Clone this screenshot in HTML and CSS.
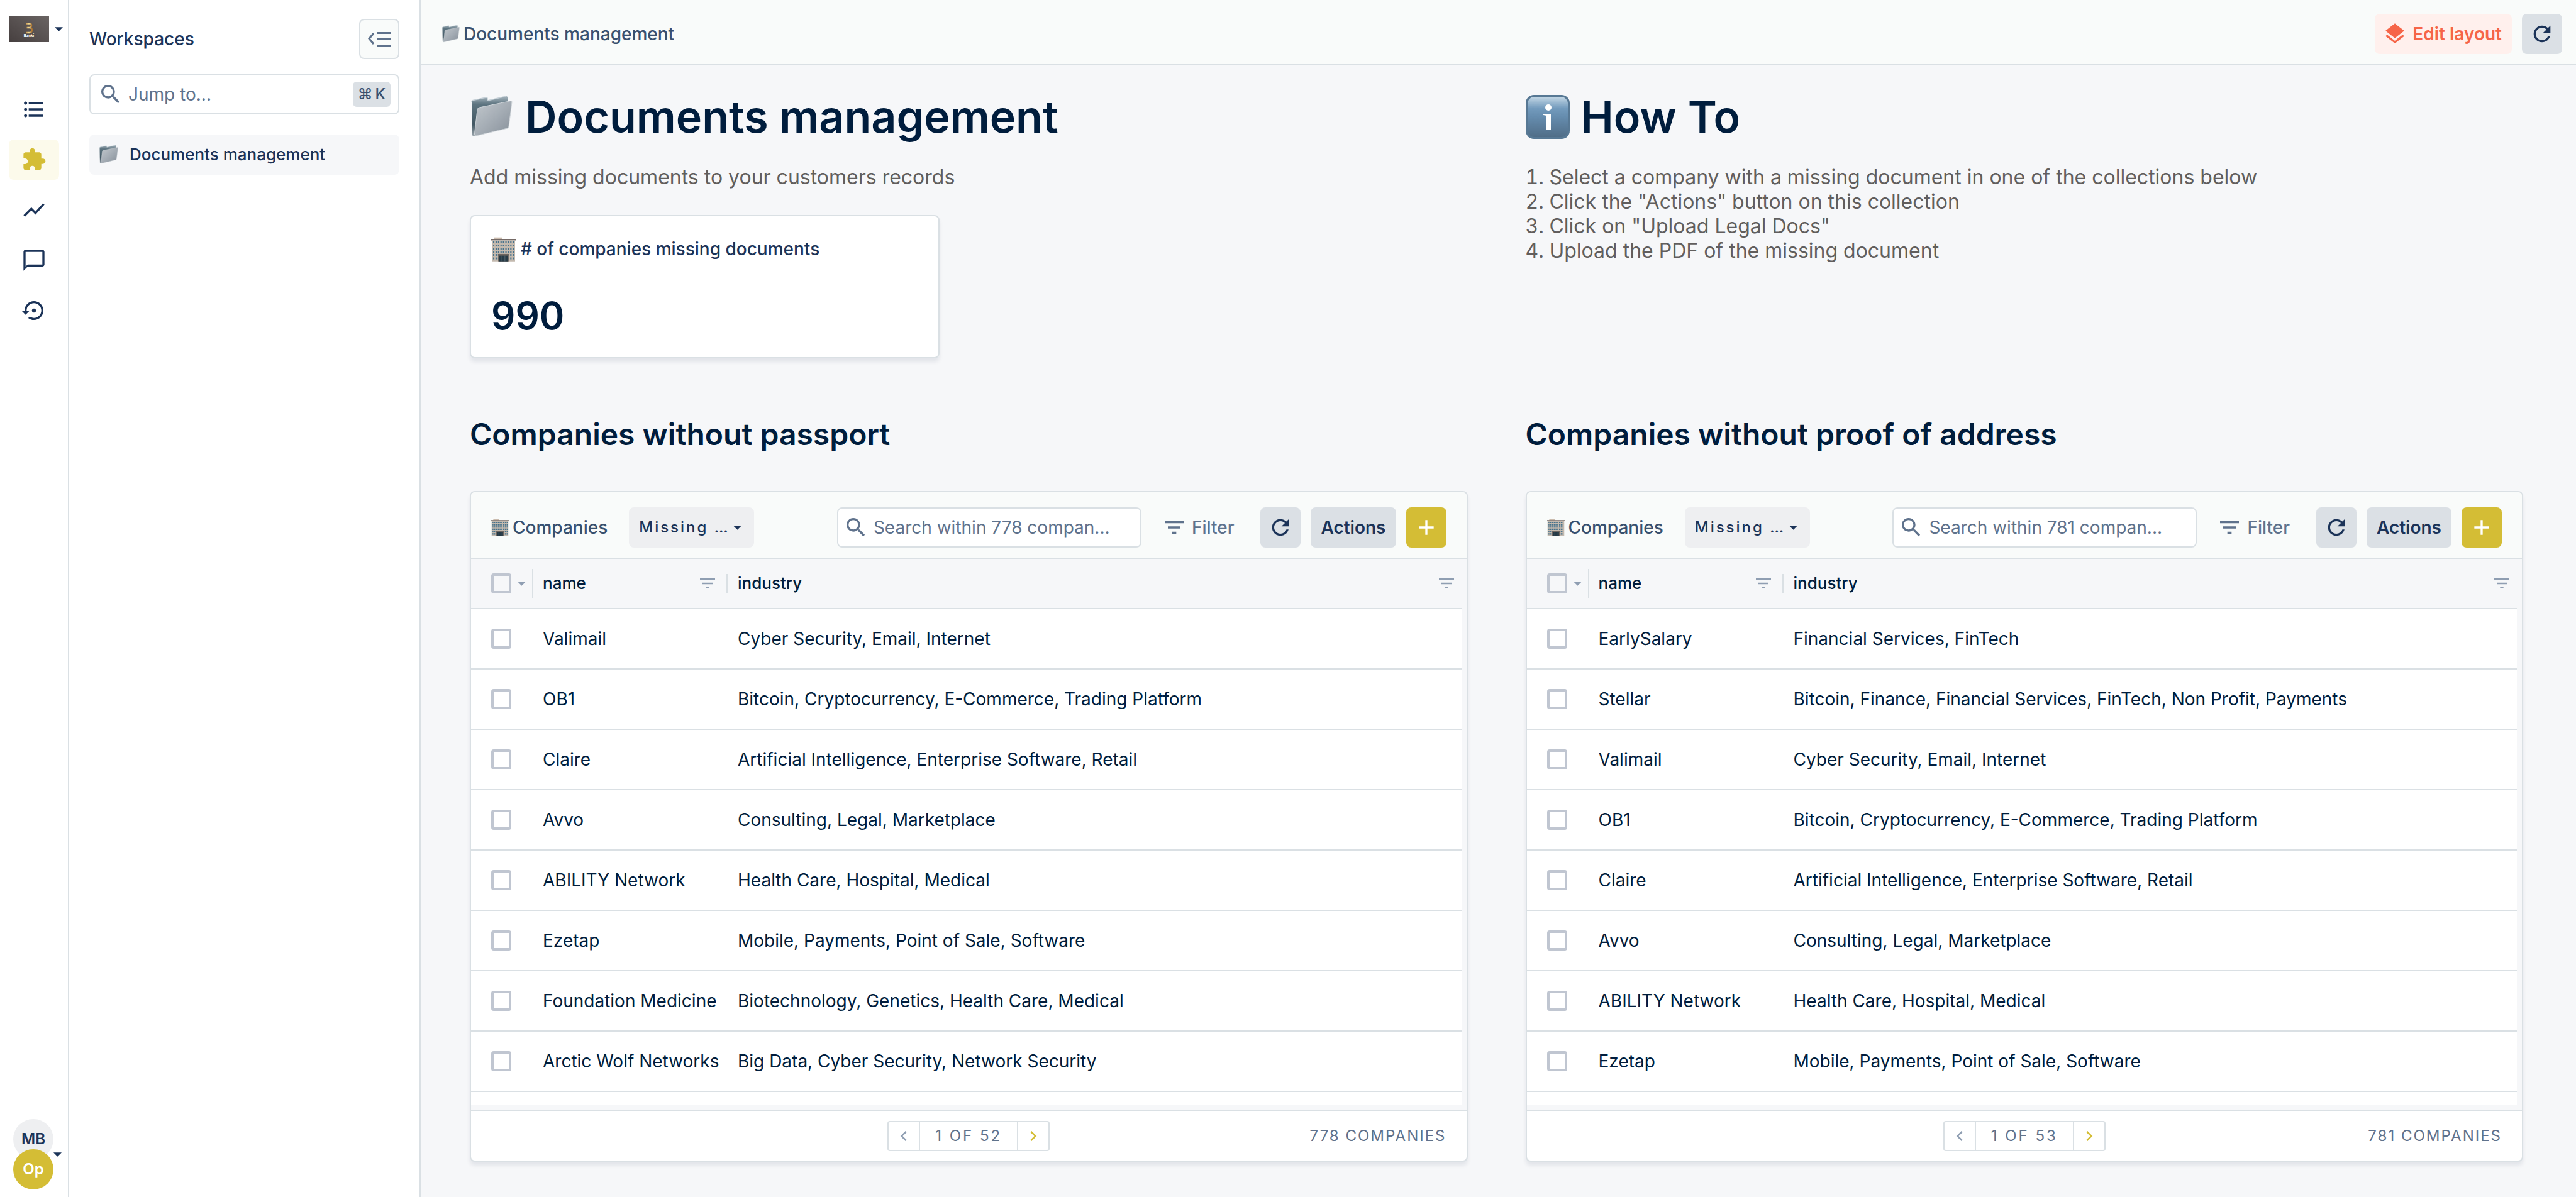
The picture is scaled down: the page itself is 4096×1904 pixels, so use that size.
FILE: index.html
```html
<!DOCTYPE html>
<html lang="en">
<head>
<meta charset="utf-8">
<title>Documents management</title>
<link rel="stylesheet" href="styles.css">
</head>
<body>
<svg class="defs" width="0" height="0" aria-hidden="true">
  <defs>
    <linearGradient id="logo-bg" x1="0" y1="1" x2="1" y2="0"><stop offset="0" stop-color="#463f3f"/><stop offset="1" stop-color="#6a6463"/></linearGradient>
    <linearGradient id="gold" x1="0" y1="0" x2="1" y2="0"><stop offset="0" stop-color="#c18b45"/><stop offset=".5" stop-color="#f3dc93"/><stop offset="1" stop-color="#a8702f"/></linearGradient>
    <linearGradient id="folder-back" x1="0" y1="0" x2="0" y2="1"><stop offset="0" stop-color="#a9b7c0"/><stop offset=".2" stop-color="#5d7480"/><stop offset=".7" stop-color="#415662"/><stop offset="1" stop-color="#9fa9b0"/></linearGradient>
    <linearGradient id="folder-front" x1="0" y1="0" x2="1" y2="1"><stop offset="0" stop-color="#c2c8cd"/><stop offset=".5" stop-color="#a5adb5"/><stop offset="1" stop-color="#868f99"/></linearGradient>
    <linearGradient id="info-bg" x1="0" y1="0" x2="0" y2="1"><stop offset="0" stop-color="#c3d7e5"/><stop offset=".28" stop-color="#739bbd"/><stop offset=".5" stop-color="#658cae"/><stop offset="1" stop-color="#506d87"/></linearGradient>
  </defs>
  <symbol id="i-list" viewBox="0 0 24 24"><path d="M4 10.5c-.83 0-1.5.67-1.5 1.5s.67 1.5 1.5 1.5 1.5-.67 1.5-1.5-.67-1.5-1.5-1.5zm0-6c-.83 0-1.5.67-1.5 1.5S3.170 7.500 4 7.500 5.500 6.830 5.500 6 4.830 4.500 4 4.500zm0 12c-.83 0-1.5.68-1.5 1.500s.68 1.500 1.500 1.500 1.500-.68 1.500-1.500-.67-1.500-1.500-1.500zM7 19h14v-2H7v2zm0-6h14v-2H7v2zm0-8v2h14V5H7z"/></symbol>
  <symbol id="i-puzzle" viewBox="0 0 24 24"><path d="M20.500 11H19V7c0-1.100-.9-2-2-2h-4V3.500C13 2.120 11.880 1 10.500 1S8 2.120 8 3.500V5H4c-1.100 0-1.990.9-1.990 2v3.800H3.500c1.490 0 2.700 1.210 2.700 2.700s-1.210 2.700-2.700 2.700H2V20c0 1.100.9 2 2 2h3.800v-1.500c0-1.490 1.210-2.700 2.700-2.700s2.700 1.210 2.700 2.700V22H17c1.100 0 2-.9 2-2v-4h1.500c1.380 0 2.500-1.120 2.500-2.500S21.880 11 20.500 11z"/></symbol>
  <symbol id="i-chart" viewBox="0 0 24 24"><path d="M3.500 18.490l6-6.010 4 4L22 6.920l-1.410-1.410-7.090 7.970-4-4L2 16.990z"/></symbol>
  <symbol id="i-chat" viewBox="0 0 24 24"><path d="M20 2H4c-1.100 0-2 .9-2 2v18l4-4h14c1.100 0 2-.9 2-2V4c0-1.100-.9-2-2-2zm0 14H6l-2 2V4h16v12z"/></symbol>
  <symbol id="i-history" viewBox="0 0 24 24"><path d="M14 12c0-1.100-.9-2-2-2s-2 .9-2 2 .9 2 2 2 2-.9 2-2zm-2-9c-4.970 0-9 4.030-9 9H0l4 4 4-4H5c0-3.870 3.130-7 7-7s7 3.130 7 7-3.130 7-7 7c-1.510 0-2.910-.49-4.060-1.300l-1.420 1.440C8.040 20.300 9.940 21 12 21c4.970 0 9-4.030 9-9s-4.030-9-9-9z"/></symbol>
  <symbol id="i-search" viewBox="0 0 24 24"><path d="M15.500 14h-.79l-.28-.27C15.410 12.590 16 11.110 16 9.500 16 5.910 13.090 3 9.500 3S3 5.910 3 9.500 5.910 16 9.500 16c1.610 0 3.090-.59 4.230-1.570l.27.28v.79l5 4.990L20.490 19l-4.990-5zm-6 0C7.010 14 5 11.990 5 9.500S7.010 5 9.500 5 14 7.010 14 9.500 11.990 14 9.500 14z"/></symbol>
  <symbol id="i-layers" viewBox="0 0 24 24"><path d="M11.990 18.540l-7.370-5.730L3 14.070l9 7 9-7-1.630-1.270-7.380 5.740zM12 16l7.360-5.730L21 9l-9-7-9 7 1.630 1.270L12 16z"/></symbol>
  <symbol id="i-refresh" viewBox="0 0 24 24"><path d="M17.650 6.350C16.200 4.900 14.210 4 12 4c-4.420 0-7.990 3.580-7.990 8s3.570 8 7.990 8c3.730 0 6.840-2.550 7.730-6h-2.080c-.82 2.330-3.040 4-5.650 4-3.310 0-6-2.690-6-6s2.690-6 6-6c1.660 0 3.140.69 4.220 1.780L13 11h7V4l-2.350 2.350z"/></symbol>
  <symbol id="i-filter" viewBox="0 0 24 24"><path d="M10 18h4v-2h-4v2zM3 6v2h18V6H3zm3 7h12v-2H6v2z"/></symbol>
  <symbol id="i-plus" viewBox="0 0 24 24"><path d="M19 13h-6v6h-2v-6H5v-2h6V5h2v6h6v2z"/></symbol>
  <symbol id="i-prev" viewBox="0 0 24 24"><path d="M15.410 7.410L14 6l-6 6 6 6 1.410-1.410L10.830 12z"/></symbol>
  <symbol id="i-next" viewBox="0 0 24 24"><path d="M10 6L8.590 7.410 13.170 12l-4.580 4.590L10 18l6-6z"/></symbol>
  <symbol id="i-caret" viewBox="0 0 14 7"><path d="M0 0h14L7 7z"/></symbol>
  <symbol id="i-collapse" viewBox="0 0 36 24"><path d="M15 1h21v3H15zM15 11h21v3H15zM15 21h21v3H15z"/><path d="M9 3L2 11.500 9 20" fill="none" stroke="currentColor" stroke-width="3"/></symbol>
  <symbol id="i-folder" viewBox="0 0 66 66">
    <path d="M1 9Q1 7 3 6.500L24 2Q26 2 26 4V7L56 0Q58 0 58 2V12L8 60L5 64Q2 64 2 61Z" fill="url(#folder-back)"/>
    <path d="M1 9Q1 7 3 6.500L24 2Q26 2 26 4V7L56 0" fill="none" stroke="#c4cfd6" stroke-width="1.500"/>
    <path d="M13 18L63 7.500Q65 7.500 65 9L60 48Q60 50 58 51L8 63Q5 63 5.500 60L10 21Q10.500 19 13 18Z" fill="url(#folder-front)" stroke="#cdd3d8" stroke-width="1"/>
  </symbol>
  <symbol id="i-building" viewBox="0 0 116 116">
    <path d="M14 2H52V10H14z" fill="#cbbcae"/>
    <path d="M0 9H116V16H0z" fill="#756a66"/>
    <path d="M3 16H113V115H3z" fill="#c3b9ae"/>
    <path d="M9 25H108M9 40H108M9 55H108M9 70H108M9 85H108M9 101H108" fill="none" stroke="#44718c" stroke-width="9" stroke-dasharray="6 5.600"/>
    <path d="M33 80H83V115H33z" fill="#6d6560"/>
    <path d="M38 88H78V115H38z" fill="#263a46"/>
    <path d="M51 88v27M65 88v27" stroke="#6d7f88" stroke-width="2"/>
  </symbol>
  <symbol id="i-info" viewBox="0 0 70 70">
    <rect width="70" height="70" rx="13" fill="#577894"/>
    <rect x="3" y="3" width="64" height="64" rx="11" fill="url(#info-bg)"/>
    <circle cx="36" cy="20" r="5" fill="#fff"/>
    <path d="M28 30.500H40V55H33V33L28 32Z" fill="#fff"/>
  </symbol>
</svg>

<div class="app">
  <nav class="rail" aria-label="Main">
    <button class="brand" aria-label="Switch project">
      <svg class="logo" viewBox="0 0 64 42"><rect width="64" height="42" fill="url(#logo-bg)"/><path d="M27 12.500H33Q36 12.500 36 15.500T33 19H28.500H33.500Q37 19.500 37 23T33 27H27" fill="none" stroke="url(#gold)" stroke-width="2.500"/><text x="32" y="34" text-anchor="middle" class="logo-name">Banki</text></svg>
      <svg class="caret"><use href="#i-caret"/></svg>
    </button>
    <div class="rail-links">
      <a href="#data" aria-label="Data"><svg class="icon"><use href="#i-list"/></svg></a>
      <a href="#workspaces" class="active" aria-label="Workspaces"><svg class="icon"><use href="#i-puzzle"/></svg></a>
      <a href="#dashboards" aria-label="Dashboards"><svg class="icon"><use href="#i-chart"/></svg></a>
      <a href="#notes" aria-label="Notes"><svg class="icon"><use href="#i-chat"/></svg></a>
      <a href="#activity" aria-label="Activity"><svg class="icon"><use href="#i-history"/></svg></a>
    </div>
    <button class="account" aria-label="Account">
      <span class="avatars"><span class="avatar">MB</span><span class="avatar team">Op</span></span>
      <svg class="caret"><use href="#i-caret"/></svg>
    </button>
  </nav>

  <aside class="side">
    <div class="side-head">
      <span>Workspaces</span>
      <button class="collapse" aria-label="Collapse panel"><svg class="collapse-icon"><use href="#i-collapse"/></svg></button>
    </div>
    <label class="field jump">
      <svg class="icon"><use href="#i-search"/></svg>
      <input type="text" placeholder="Jump to..." aria-label="Jump to">
      <kbd><span>⌘</span><span>K</span></kbd>
    </label>
    <a href="#documents" class="side-item"><svg class="emoji"><use href="#i-folder"/></svg>Documents management</a>
  </aside>

  <main class="main">
    <header class="topbar">
      <div class="crumb"><svg class="emoji small"><use href="#i-folder"/></svg>Documents management</div>
      <div class="top-actions">
        <button class="btn edit"><svg class="icon"><use href="#i-layers"/></svg>Edit layout</button>
        <button class="btn square" aria-label="Refresh"><svg class="icon"><use href="#i-refresh"/></svg></button>
      </div>
    </header>

    <div class="board">
      <section class="column">
        <div class="intro">
          <h1><svg class="emoji h-folder"><use href="#i-folder"/></svg>Documents management</h1>
          <p>Add missing documents to your customers records</p>
          <div class="metric">
            <div class="metric-title"><svg class="emoji building"><use href="#i-building"/></svg># of companies missing documents</div>
            <div class="metric-value">990</div>
          </div>
        </div>
        <h2>Companies without passport</h2>
        <div class="panel">
          <div class="toolbar">
            <div class="collection"><svg class="emoji small"><use href="#i-building"/></svg>Companies</div>
            <div class="segment"><select aria-label="Segment"><option>Missing …</option></select><svg class="caret"><use href="#i-caret"/></svg></div>
            <label class="field search"><svg class="icon"><use href="#i-search"/></svg><input type="text" placeholder="Search within 778 compan..." aria-label="Search companies"></label>
            <button class="filter"><svg class="icon"><use href="#i-filter"/></svg>Filter</button>
            <button class="btn square" aria-label="Refresh"><svg class="icon"><use href="#i-refresh"/></svg></button>
            <button class="btn">Actions</button>
            <button class="btn square add" aria-label="Add"><svg class="icon"><use href="#i-plus"/></svg></button>
          </div>
          <div class="grid-area">
            <div class="grid-scroll">
              <table>
                <thead><tr>
                  <th class="c-check"><div class="th"><input type="checkbox" aria-label="Select all"><svg class="caret"><use href="#i-caret"/></svg><i class="rule tall"></i></div></th>
                  <th class="c-name"><div class="th"><span>name</span><svg class="icon sort"><use href="#i-filter"/></svg><i class="rule"></i></div></th>
                  <th><div class="th last"><span>industry</span><svg class="icon sort"><use href="#i-filter"/></svg></div></th>
                </tr></thead>
                <tbody>
                  <tr><td><input type="checkbox" aria-label="Select Valimail"></td><td>Valimail</td><td>Cyber Security, Email, Internet</td></tr>
                  <tr><td><input type="checkbox" aria-label="Select OB1"></td><td>OB1</td><td>Bitcoin, Cryptocurrency, E-Commerce, Trading Platform</td></tr>
                  <tr><td><input type="checkbox" aria-label="Select Claire"></td><td>Claire</td><td>Artificial Intelligence, Enterprise Software, Retail</td></tr>
                  <tr><td><input type="checkbox" aria-label="Select Avvo"></td><td>Avvo</td><td>Consulting, Legal, Marketplace</td></tr>
                  <tr><td><input type="checkbox" aria-label="Select ABILITY Network"></td><td>ABILITY Network</td><td>Health Care, Hospital, Medical</td></tr>
                  <tr><td><input type="checkbox" aria-label="Select Ezetap"></td><td>Ezetap</td><td>Mobile, Payments, Point of Sale, Software</td></tr>
                  <tr><td><input type="checkbox" aria-label="Select Foundation Medicine"></td><td>Foundation Medicine</td><td>Biotechnology, Genetics, Health Care, Medical</td></tr>
                  <tr><td><input type="checkbox" aria-label="Select Arctic Wolf Networks"></td><td>Arctic Wolf Networks</td><td>Big Data, Cyber Security, Network Security</td></tr>
                  <tr><td></td><td></td><td></td></tr>
                </tbody>
              </table>
            </div>
          </div>
          <footer class="panel-foot">
            <div class="pager"><button aria-label="Previous page"><svg class="icon sort"><use href="#i-prev"/></svg></button><span>1 OF 52</span><button class="next" aria-label="Next page"><svg class="icon sort"><use href="#i-next"/></svg></button></div>
            <span class="count">778 COMPANIES</span>
          </footer>
        </div>
      </section>

      <section class="column">
        <div class="intro">
          <h1><svg class="emoji h-info"><use href="#i-info"/></svg>How To</h1>
          <ol>
            <li>Select a company with a missing document in one of the collections below</li>
            <li>Click the "Actions" button on this collection</li>
            <li>Click on "Upload Legal Docs"</li>
            <li>Upload the PDF of the missing document</li>
          </ol>
        </div>
        <h2>Companies without proof of address</h2>
        <div class="panel">
          <div class="toolbar">
            <div class="collection"><svg class="emoji small"><use href="#i-building"/></svg>Companies</div>
            <div class="segment"><select aria-label="Segment"><option>Missing …</option></select><svg class="caret"><use href="#i-caret"/></svg></div>
            <label class="field search"><svg class="icon"><use href="#i-search"/></svg><input type="text" placeholder="Search within 781 compan..." aria-label="Search companies"></label>
            <button class="filter"><svg class="icon"><use href="#i-filter"/></svg>Filter</button>
            <button class="btn square" aria-label="Refresh"><svg class="icon"><use href="#i-refresh"/></svg></button>
            <button class="btn">Actions</button>
            <button class="btn square add" aria-label="Add"><svg class="icon"><use href="#i-plus"/></svg></button>
          </div>
          <div class="grid-area">
            <div class="grid-scroll">
              <table>
                <thead><tr>
                  <th class="c-check"><div class="th"><input type="checkbox" aria-label="Select all"><svg class="caret"><use href="#i-caret"/></svg><i class="rule tall"></i></div></th>
                  <th class="c-name"><div class="th"><span>name</span><svg class="icon sort"><use href="#i-filter"/></svg><i class="rule"></i></div></th>
                  <th><div class="th last"><span>industry</span><svg class="icon sort"><use href="#i-filter"/></svg></div></th>
                </tr></thead>
                <tbody>
                  <tr><td><input type="checkbox" aria-label="Select EarlySalary"></td><td>EarlySalary</td><td>Financial Services, FinTech</td></tr>
                  <tr><td><input type="checkbox" aria-label="Select Stellar"></td><td>Stellar</td><td>Bitcoin, Finance, Financial Services, FinTech, Non Profit, Payments</td></tr>
                  <tr><td><input type="checkbox" aria-label="Select Valimail"></td><td>Valimail</td><td>Cyber Security, Email, Internet</td></tr>
                  <tr><td><input type="checkbox" aria-label="Select OB1"></td><td>OB1</td><td>Bitcoin, Cryptocurrency, E-Commerce, Trading Platform</td></tr>
                  <tr><td><input type="checkbox" aria-label="Select Claire"></td><td>Claire</td><td>Artificial Intelligence, Enterprise Software, Retail</td></tr>
                  <tr><td><input type="checkbox" aria-label="Select Avvo"></td><td>Avvo</td><td>Consulting, Legal, Marketplace</td></tr>
                  <tr><td><input type="checkbox" aria-label="Select ABILITY Network"></td><td>ABILITY Network</td><td>Health Care, Hospital, Medical</td></tr>
                  <tr><td><input type="checkbox" aria-label="Select Ezetap"></td><td>Ezetap</td><td>Mobile, Payments, Point of Sale, Software</td></tr>
                  <tr><td></td><td></td><td></td></tr>
                </tbody>
              </table>
            </div>
          </div>
          <footer class="panel-foot">
            <div class="pager"><button aria-label="Previous page"><svg class="icon sort"><use href="#i-prev"/></svg></button><span>1 OF 53</span><button class="next" aria-label="Next page"><svg class="icon sort"><use href="#i-next"/></svg></button></div>
            <span class="count">781 COMPANIES</span>
          </footer>
        </div>
      </section>
    </div>
  </main>
</div>
</body>
</html>
```
FILE: styles.css
```css
:root {
  --navy: #1b3358;
  --ink: #001d3d;
  --muted: #5f728c;
  --line: #dae0e4;
  --gold: #d4bd35;
  --page: #f6f7f9;
  --bar: #f9fbfa;
  --control: #dbe0e5;
}

* { box-sizing: border-box; }

body {
  margin: 0;
  font-family: Inter, "Liberation Sans", sans-serif;
  font-size: 28px;
  line-height: 40px;
  color: var(--navy);
  background: var(--page);
}

button, input, select, kbd { font: inherit; color: inherit; }
button { border: 0; padding: 0; background: none; }
a { color: inherit; text-decoration: none; }
h1, h2, p, ol { margin: 0; padding: 0; }

.defs { position: absolute; }
.icon { width: 40px; height: 40px; flex: none; fill: currentColor; }
.icon.sort { width: 32px; height: 32px; }
.caret { width: 13px; height: 7px; flex: none; fill: currentColor; }
.emoji { width: 30px; height: 30px; flex: none; }
.emoji.small { width: 28px; height: 28px; }

.app { display: flex; height: 100vh; }

/* Icon rail */
.rail {
  display: flex;
  flex-direction: column;
  flex: none;
  width: 110px;
  padding: 25px 0 12px 14px;
  border-right: 2px solid var(--line);
  background: #fff;
}
.brand { display: flex; align-items: center; gap: 9px; }
.logo { width: 64px; height: 42px; }
.logo-name { font-size: 6px; font-weight: 700; fill: #fff; }
.rail-links { display: flex; flex-direction: column; gap: 16px; margin-top: 75px; }
.rail-links a {
  display: flex;
  align-items: center;
  justify-content: center;
  width: 80px;
  height: 64px;
  border-radius: 8px;
}
.rail-links .active { background: #fcfaeb; color: var(--gold); }
.account { display: flex; align-items: center; margin-top: auto; padding-left: 7px; }
.avatars { display: flex; flex-direction: column; }
.avatar {
  width: 64px;
  height: 64px;
  border-radius: 50%;
  background: #eeeff1;
  font-size: 24px;
  font-weight: 600;
  line-height: 64px;
  text-align: center;
}
.avatar.team { margin-top: -16px; background: var(--gold); color: #fff; }

/* Workspace list */
.side {
  flex: none;
  width: 559px;
  padding: 30px 32px;
  border-right: 2px solid var(--line);
  background: #fff;
}
.side-head { display: flex; align-items: center; justify-content: space-between; font-weight: 500; }
.collapse {
  display: flex;
  align-items: center;
  justify-content: center;
  width: 64px;
  height: 64px;
  border: 2px solid var(--line);
  border-radius: 8px;
  background: var(--bar);
  color: var(--muted);
}
.collapse-icon { width: 36px; height: 24px; fill: currentColor; }
.field {
  display: flex;
  align-items: center;
  height: 64px;
  border: 2px solid var(--line);
  border-radius: 8px;
  background: #fff;
  color: var(--muted);
}
.field input { flex: 1; min-width: 0; padding: 0; border: 0; outline: 0; background: none; }
.field input::placeholder { color: var(--muted); opacity: 1; }
.jump { gap: 8px; margin-top: 24px; padding: 0 12px; }
.jump kbd {
  display: flex;
  gap: 4px;
  height: 40px;
  padding: 0 8px;
  border-radius: 6px;
  background: var(--control);
  color: #38506f;
  font-size: 24px;
  font-weight: 500;
}
.side-item {
  display: flex;
  align-items: center;
  gap: 18px;
  height: 64px;
  margin-top: 32px;
  padding: 0 16px;
  border-radius: 8px;
  background: var(--page);
  font-size: 26px;
  font-weight: 500;
}

/* Top bar */
.main { display: flex; flex-direction: column; flex: 1; min-width: 0; }
.topbar {
  display: flex;
  align-items: center;
  justify-content: space-between;
  flex: none;
  height: 104px;
  padding: 6px 22px 0 34px;
  border-bottom: 2px solid var(--line);
  background: var(--bar);
}
.crumb { display: flex; align-items: center; gap: 6px; color: #38506f; font-weight: 500; }
.top-actions { display: flex; gap: 16px; }
.btn {
  display: flex;
  align-items: center;
  justify-content: center;
  height: 64px;
  padding: 0 16px;
  border-radius: 8px;
  background: var(--control);
  font-weight: 600;
}
.btn.square { width: 64px; padding: 0; }
.btn.add { background: var(--gold); color: #fff; }
.btn.edit { gap: 8px; padding: 0 16px 0 12px; background: #fff0ed; color: #f66548; }

/* Board */
.board {
  display: grid;
  grid-template-columns: 1fr 1fr;
  gap: 92px;
  flex: 1;
  min-height: 0;
  padding: 40px 84px 56px 78px;
}
.column { display: flex; flex-direction: column; min-width: 0; min-height: 0; }
.intro { height: 426px; color: #615e5d; font-size: 32px; line-height: 39px; }
h1 {
  display: flex;
  align-items: center;
  gap: 18px;
  height: 84px;
  margin-bottom: 34px;
  color: var(--ink);
  font-size: 70px;
  font-weight: 600;
  line-height: 84px;
}
.h-folder { width: 70px; height: 66px; }
.h-info { width: 70px; height: 70px; }
ol { list-style-position: inside; }
.metric {
  width: calc(50% - 46px);
  margin-top: 41px;
  padding: 32px 32px 30px;
  border: 2px solid var(--line);
  border-radius: 8px;
  background: #fff;
  box-shadow: 0 6px 6px rgba(0, 29, 61, .08);
}
.metric-title {
  display: flex;
  align-items: center;
  gap: 8px;
  color: var(--navy);
  font-size: 28px;
  font-weight: 500;
  line-height: 40px;
}
.building { width: 39px; height: 39px; }
.metric-value { margin-top: 50px; color: var(--ink); font-size: 60px; font-weight: 600; line-height: 72px; }
h2 { margin: 91px 0 60px; color: var(--ink); font-size: 48px; font-weight: 600; line-height: 60px; }

/* Collection panel */
.panel {
  display: flex;
  flex-direction: column;
  flex: 1;
  min-height: 0;
  overflow: hidden;
  border: 2px solid var(--line);
  border-radius: 8px;
  background: #fff;
  box-shadow: 0 6px 6px rgba(0, 29, 61, .08);
}
.toolbar {
  display: flex;
  align-items: center;
  gap: 16px;
  flex: none;
  padding: 24px 32px 16px;
  border-bottom: 2px solid var(--line);
  background: var(--bar);
}
.collection { display: flex; align-items: center; gap: 6px; color: #38506f; font-weight: 500; }
.segment { display: grid; align-items: center; width: 199px; margin-left: 18px; }
.segment select {
  grid-area: 1 / 1;
  height: 64px;
  padding: 0 16px;
  border: 0;
  border-radius: 8px;
  appearance: none;
  background: #eeeff1;
  font-size: 24px;
  font-weight: 500;
  letter-spacing: 3px;
}
.segment .caret { grid-area: 1 / 1; justify-self: end; margin-right: 20px; pointer-events: none; }
.search { gap: 8px; width: 484px; margin-left: auto; padding: 0 8px; }
.filter {
  display: flex;
  align-items: center;
  gap: 8px;
  margin: 0 26px 0 16px;
  color: var(--muted);
  font-weight: 500;
}
.grid-area { display: flex; flex: 1; min-height: 0; padding: 0 8px 8px 0; background: var(--page); }
.grid-scroll { flex: 1; overflow: hidden; }
table { width: 100%; table-layout: fixed; border-collapse: separate; border-spacing: 0; color: var(--ink); }
th, td { height: 96px; padding: 0 16px; border-bottom: 2px solid var(--line); text-align: left; white-space: nowrap; }
th { height: 80px; padding: 0; font-size: 26px; font-weight: 500; }
td { background: #fff; }
th:first-child .th, td:first-child { padding-left: 32px; }
.c-check { width: 98px; }
.c-name { width: 310px; }
.th { display: flex; align-items: center; gap: 10px; height: 78px; padding-left: 16px; color: #8f9eb2; }
.th span { flex: 1; color: var(--ink); }
.th.last { padding-right: 8px; }
.c-name .th { gap: 14px; }
.rule { width: 2px; height: 31px; background: var(--line); }
.rule.tall { height: 46px; }
input[type="checkbox"] {
  display: block;
  flex: none;
  width: 32px;
  height: 32px;
  margin: 0;
  border: 4px solid #c0c6d1;
  border-radius: 4px;
  appearance: none;
}
.panel-foot {
  display: grid;
  grid-template-columns: 1fr auto 1fr;
  align-items: center;
  flex: none;
  height: 80px;
  padding: 0 32px;
  border-top: 2px solid var(--line);
  color: var(--muted);
  font-size: 24px;
  letter-spacing: 3px;
}
.pager { display: flex; grid-column: 2; height: 48px; border: 2px solid var(--line); border-radius: 4px; line-height: 44px; }
.pager span { padding: 0 24px; border: solid var(--line); border-width: 0 2px; }
.pager button { display: flex; align-items: center; justify-content: center; width: 48px; color: #8f9eb2; }
.pager .next { color: var(--gold); }
.count { justify-self: end; letter-spacing: 2px; }
```
